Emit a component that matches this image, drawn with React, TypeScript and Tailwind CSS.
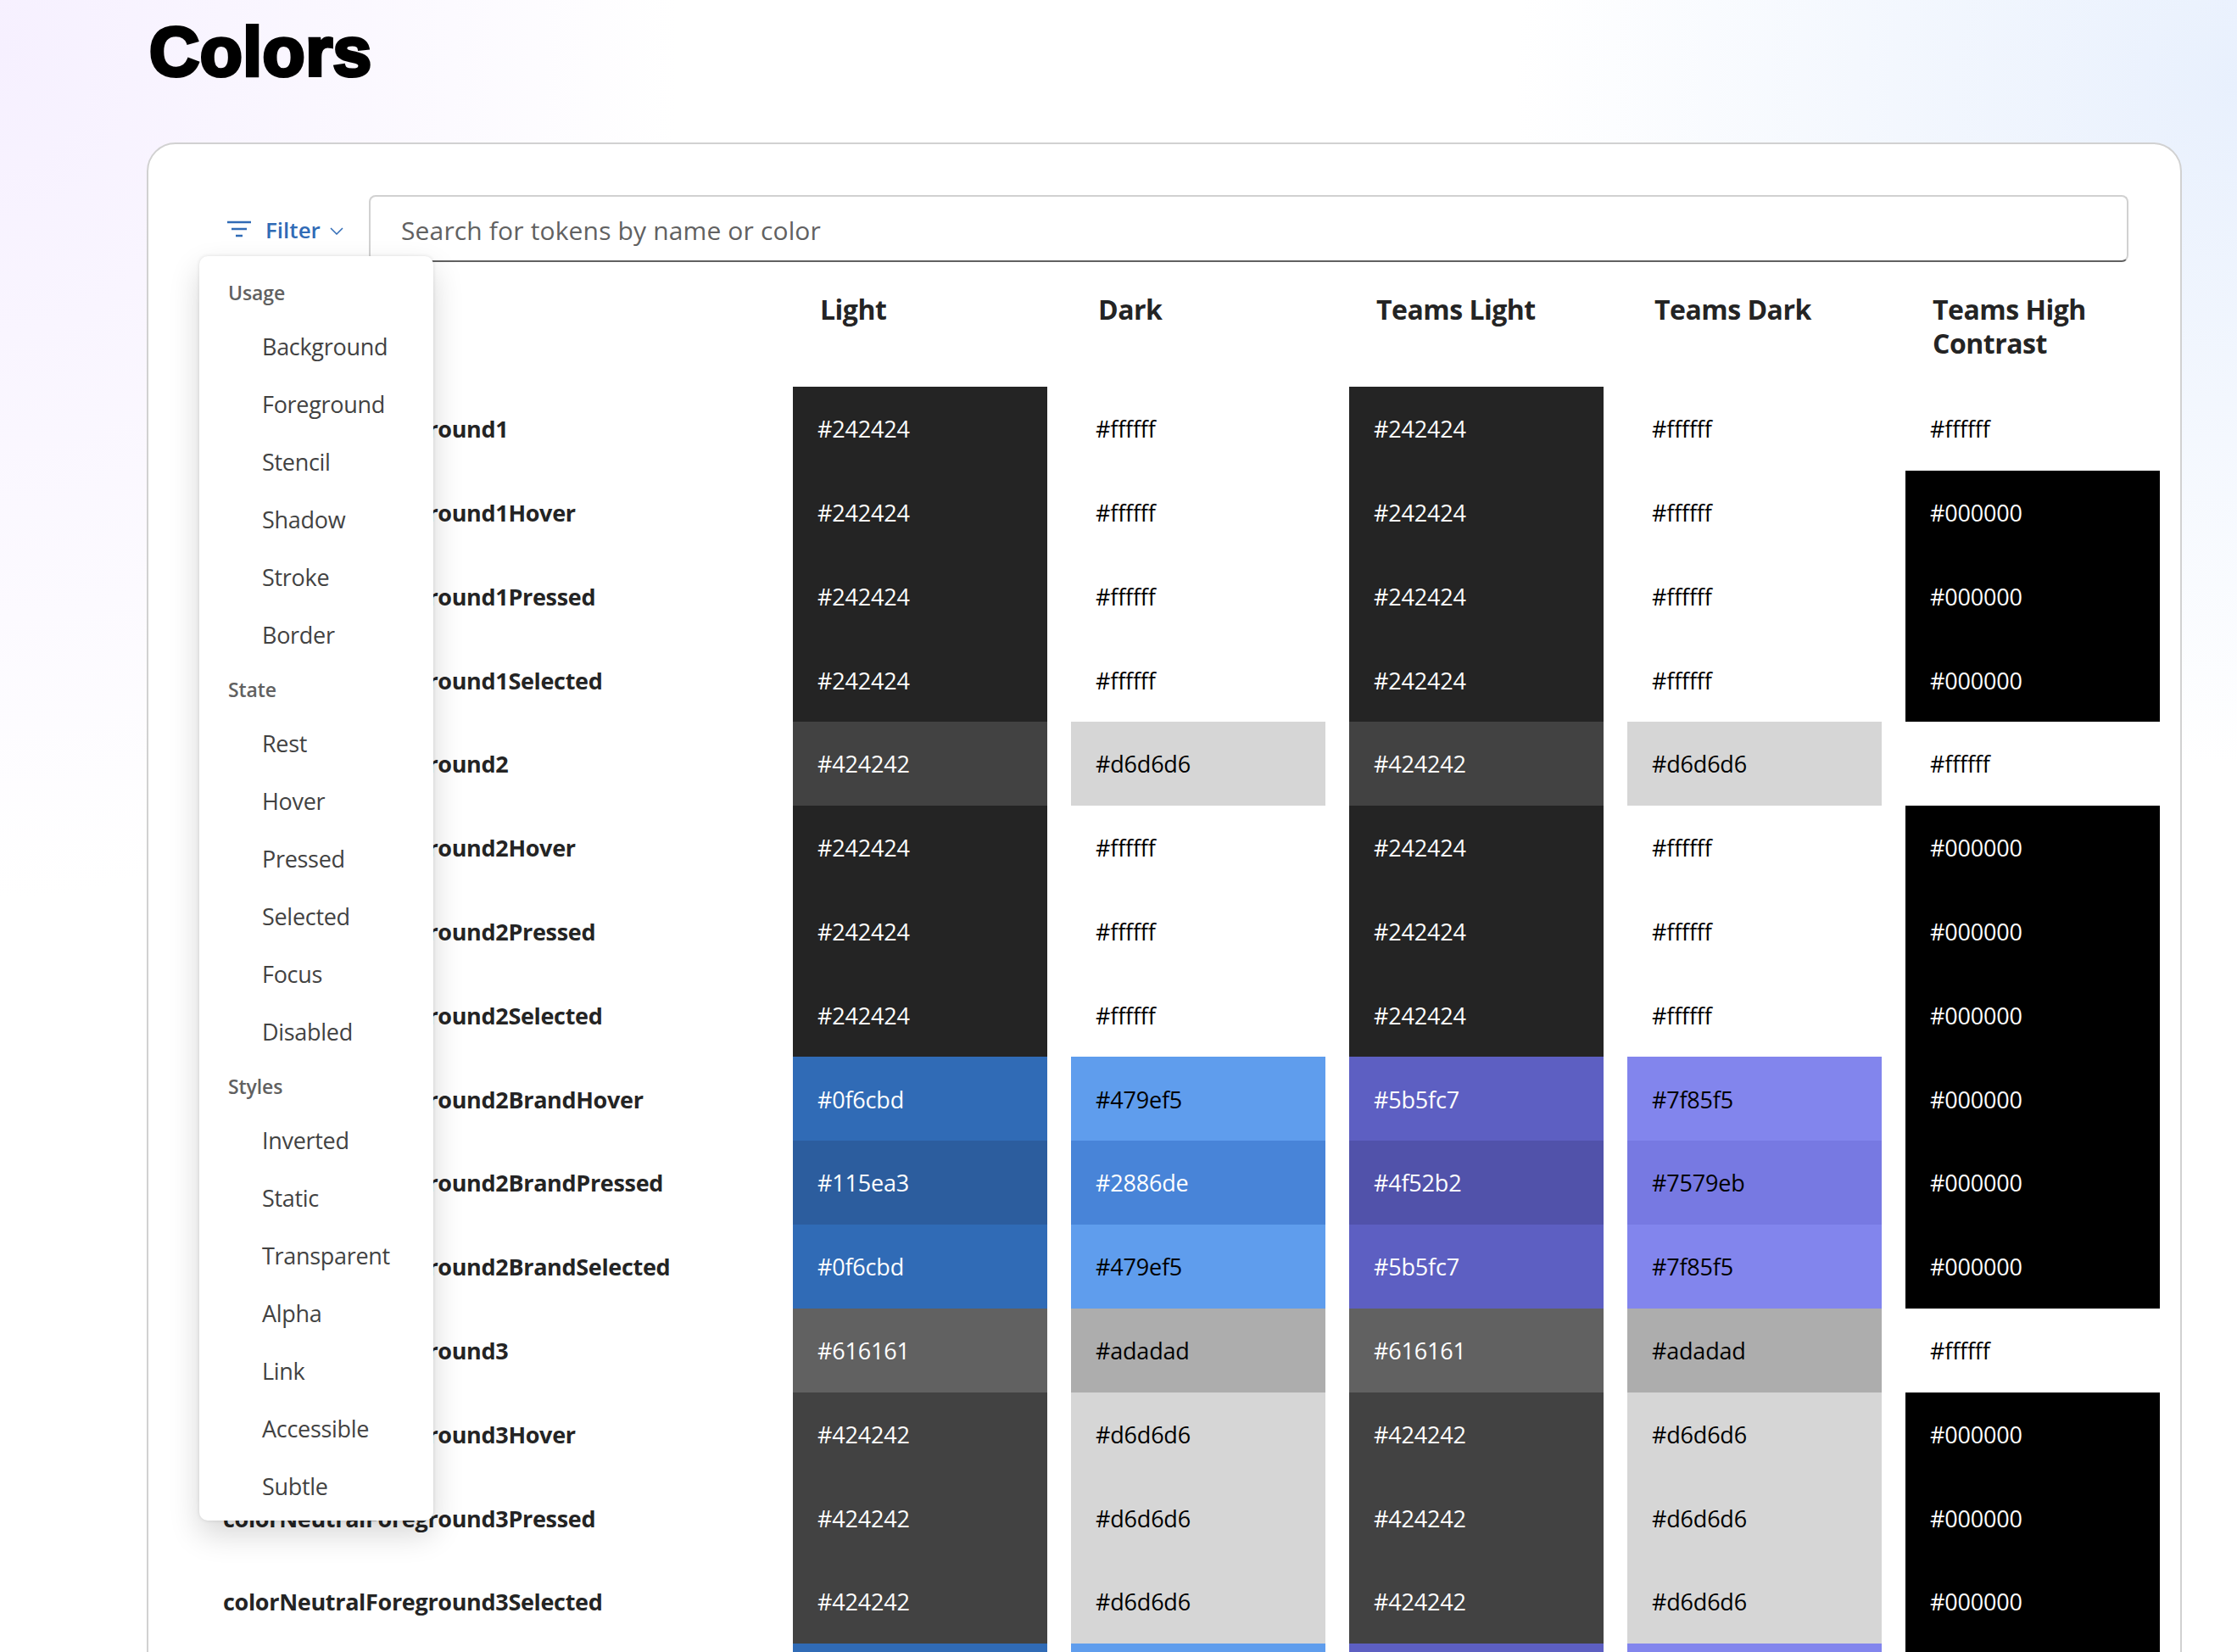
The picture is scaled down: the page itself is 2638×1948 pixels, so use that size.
const rows: [string, string[]][] = [
  ['colorNeutralForeground1', ['242424', 'ffffff', '242424', 'ffffff', 'ffffff']],
  ['colorNeutralForeground1Hover', ['242424', 'ffffff', '242424', 'ffffff', '000000']],
  ['colorNeutralForeground1Pressed', ['242424', 'ffffff', '242424', 'ffffff', '000000']],
  ['colorNeutralForeground1Selected', ['242424', 'ffffff', '242424', 'ffffff', '000000']],
  ['colorNeutralForeground2', ['424242', 'd6d6d6', '424242', 'd6d6d6', 'ffffff']],
  ['colorNeutralForeground2Hover', ['242424', 'ffffff', '242424', 'ffffff', '000000']],
  ['colorNeutralForeground2Pressed', ['242424', 'ffffff', '242424', 'ffffff', '000000']],
  ['colorNeutralForeground2Selected', ['242424', 'ffffff', '242424', 'ffffff', '000000']],
  ['colorNeutralForeground2BrandHover', ['0f6cbd', '479ef5', '5b5fc7', '7f85f5', '000000']],
  ['colorNeutralForeground2BrandPressed', ['115ea3', '2886de', '4f52b2', '7579eb', '000000']],
  ['colorNeutralForeground2BrandSelected', ['0f6cbd', '479ef5', '5b5fc7', '7f85f5', '000000']],
  ['colorNeutralForeground3', ['616161', 'adadad', '616161', 'adadad', 'ffffff']],
  ['colorNeutralForeground3Hover', ['424242', 'd6d6d6', '424242', 'd6d6d6', '000000']],
  ['colorNeutralForeground3Pressed', ['424242', 'd6d6d6', '424242', 'd6d6d6', '000000']],
  ['colorNeutralForeground3Selected', ['424242', 'd6d6d6', '424242', 'd6d6d6', '000000']],
  ['colorNeutralForeground3BrandHover', ['0f6cbd', '479ef5', '5b5fc7', '7f85f5', '000000']],
]

// swatch colours as they appear in the screenshot
const swatch: Record<string, string> = {
  '242424': 'bg-[#242424] text-white',
  'ffffff': 'bg-white text-black',
  '000000': 'bg-black text-white',
  '424242': 'bg-[#424242] text-white',
  'd6d6d6': 'bg-[#d6d6d6] text-black',
  '616161': 'bg-[#616161] text-white',
  'adadad': 'bg-[#adadad] text-black',
  '0f6cbd': 'bg-[#306bb6] text-white',
  '115ea3': 'bg-[#2c5d9e] text-white',
  '479ef5': 'bg-[#5f9ded] text-black',
  '2886de': 'bg-[#4884d8] text-white',
  '5b5fc7': 'bg-[#5d5fc2] text-white',
  '4f52b2': 'bg-[#5152aa] text-white',
  '7f85f5': 'bg-[#8285ed] text-black',
  '7579eb': 'bg-[#7779e2] text-black',
}

const menu = [
  { title: 'Usage', items: ['Background', 'Foreground', 'Stencil', 'Shadow', 'Stroke', 'Border'] },
  { title: 'State', items: ['Rest', 'Hover', 'Pressed', 'Selected', 'Focus', 'Disabled'] },
  { title: 'Styles', items: ['Inverted', 'Static', 'Transparent', 'Alpha', 'Link', 'Accessible', 'Subtle'] },
]

const columns = ['Light', 'Dark', 'Teams Light', 'Teams Dark', 'Teams High Contrast']

function FilterMenu() {
  return (
    <div className="absolute left-[60px] top-[132px] w-[276px] rounded-[10px] bg-white pt-[13px] pb-[6px] shadow-[0_0_4px_rgba(0,0,0,0.12),0_16px_36px_rgba(0,0,0,0.16)]">
      {menu.map((group) => (
        <div key={group.title}>
          <div className="flex h-[60px] items-center pl-[34px] text-[23px] font-semibold tracking-[-0.1px] text-[#616161]">{group.title}</div>
          {group.items.map((item) => (
            <div key={item} className="flex h-[68px] items-center pl-[74px] text-[27px] tracking-[-0.3px] text-[#424242]">
              {item}
            </div>
          ))}
        </div>
      ))}
    </div>
  )
}

export default function App() {
  return (
    <div className="h-[1948px] overflow-hidden bg-[radial-gradient(ellipse_800px_1000px_at_0px_60px,#f6f0ff,transparent),radial-gradient(ellipse_850px_800px_at_100%_100px,#e8f0fd,transparent)] bg-white font-['Open_Sans',sans-serif] text-[#242424]">
      <div className="h-[168px] pl-[176px] pt-[5px]">
        <h1 className="font-['Liberation_Sans',sans-serif] text-[82px] leading-[112px] font-bold tracking-[0.5px] text-black [-webkit-text-stroke:4px_black]">Colors</h1>
      </div>
      <div className="relative ml-[173px] h-[1900px] w-[2400px] rounded-[34px] border-2 border-[#d1d1d1] bg-white">
        <div className="flex pt-[60px] pr-[61px]">
          <div className="flex h-[79px] w-[260px] items-center pl-[92px] text-[#306bb6]">
            <svg width="30" height="20" viewBox="0 0 30 20" fill="none" stroke="currentColor" strokeWidth="2.5">
              <path d="M1 2h28M6 10h18M11 18h8" />
            </svg>
            <span className="ml-[16px] mt-[3px] text-[26px] font-semibold">Filter</span>
            <svg className="ml-[11px] mt-[5px]" width="16" height="9" viewBox="0 0 16 9" fill="none" stroke="currentColor" strokeWidth="1.5">
              <path d="M1 1l7 7 7-7" />
            </svg>
          </div>
          <div className="flex h-[79px] flex-1 items-center rounded-[8px] border-2 border-[#d1d1d1] border-b-[#616161] pl-[36px] pt-[3px] text-[30px] tracking-[0.15px] text-[#616161]">
            Search for tokens by name or color
          </div>
        </div>
        <div className="pl-[88px]">
          <div className="grid h-[147px] grid-cols-[644px_repeat(5,300px)] gap-x-[28px] pt-[36px]">
            <div />
            {columns.map((col) => (
              <div key={col} className="pl-[32px] text-[32px] leading-[40px] font-bold tracking-[-0.5px]">
                {col}
              </div>
            ))}
          </div>
          <div className="grid grid-cols-[644px_repeat(5,300px)] auto-rows-[98.8px] gap-x-[28px]">
            {rows.map(([name, values]) => (
              <div key={name} className="contents">
                <div className="flex items-center pt-[2px] text-[27px] font-bold tracking-[-0.33px]">{name}</div>
                {values.map((value, i) => (
                  <div key={i} className={`flex items-center pl-[29px] pt-[2px] text-[27px] tracking-[-0.2px] ${swatch[value]}`}>
                    #{value}
                  </div>
                ))}
              </div>
            ))}
          </div>
        </div>
        <FilterMenu />
      </div>
    </div>
  )
}
